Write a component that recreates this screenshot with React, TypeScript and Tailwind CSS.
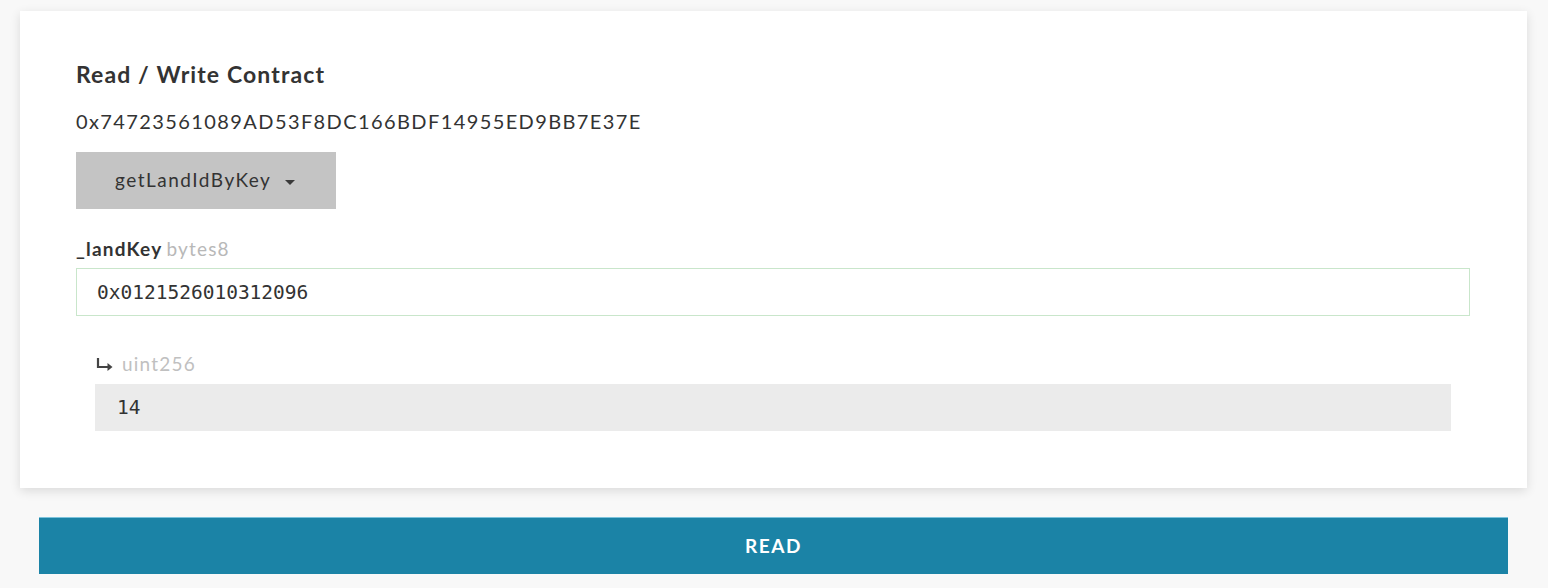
import React, { useState } from "react";

const ContractReader: React.FC = () => {
    const [landKey, setLandKey] = useState<string>("0x0121526010312096");

    return (
        <div className="w-full h-[588px] bg-[#f8f8f8] pt-[11px] font-['Lato',sans-serif] overflow-hidden">
            {/* Contract card */}
            <div className="ml-[20px] mr-[21px] bg-white shadow-[0_3px_10px_rgba(0,0,0,0.12)] pt-[49px] pb-[57px] pl-[56px] pr-[57px]">
                <h1 className="text-[23px] leading-[28px] font-bold tracking-[1.1px] text-[#333333]">
                    Read / Write Contract
                </h1>
                <div className="mt-[21px] text-[20px] leading-[24px] tracking-[1.4px] text-[#333333]">
                    0x74723561089AD53F8DC166BDF14955ED9BB7E37E
                </div>

                <button className="mt-[19px] w-[260px] h-[57px] bg-[#c4c4c4] flex items-center pl-[39px] text-[19px] tracking-[1.5px] text-[#333333]">
                    <span>getLandIdByKey</span>
                    <svg width="10" height="5" viewBox="0 0 10 5" className="ml-[14px] mt-[3px]">
                        <path d="M0 0 L10 0 L5 5 Z" fill="#3a3a3a" />
                    </svg>
                </button>

                {/* Input param */}
                <div className="mt-[28px] text-[19px] leading-[24px] tracking-[1.2px]">
                    <span className="font-bold text-[#333333]">_landKey</span>
                    <span className="ml-[4px] text-[#b8b8b8]">bytes8</span>
                </div>
                <input
                    type="text"
                    value={landKey}
                    onChange={(e) => setLandKey(e.target.value)}
                    className="mt-[7px] w-full h-[48px] border border-[#c9e6cb] bg-white px-[20px] font-['DejaVu_Sans_Mono',monospace] text-[19.5px] text-[#333333] outline-none"
                />

                {/* Output */}
                <div className="px-[19px]">
                    <div className="mt-[36px] flex items-center text-[19px] leading-[24px] tracking-[1.2px] text-[#c0c0c0]">
                        <svg width="18" height="14" viewBox="0 0 18 14" className="ml-[1px]">
                            <path d="M2 1 V10 H13" fill="none" stroke="#444444" strokeWidth="2.2" />
                            <path d="M11.5 6 L16.5 10 L11.5 14 Z" fill="#444444" />
                        </svg>
                        <span className="ml-[8px]">uint256</span>
                    </div>
                    <div className="mt-[8px] h-[47px] bg-[#ebebeb] flex items-center px-[22px] font-['DejaVu_Sans_Mono',monospace] text-[19.5px] text-[#333333]">
                        14
                    </div>
                </div>
            </div>

            {/* Read button */}
            <button className="mt-[29px] ml-[39px] w-[1469px] h-[57px] bg-[#1b83a6] border-t border-[#7cc3dc] text-white font-bold text-[19px] tracking-[1.5px]">
                READ
            </button>
        </div>
    );
};

export default function App() {
    return <ContractReader />;
}
